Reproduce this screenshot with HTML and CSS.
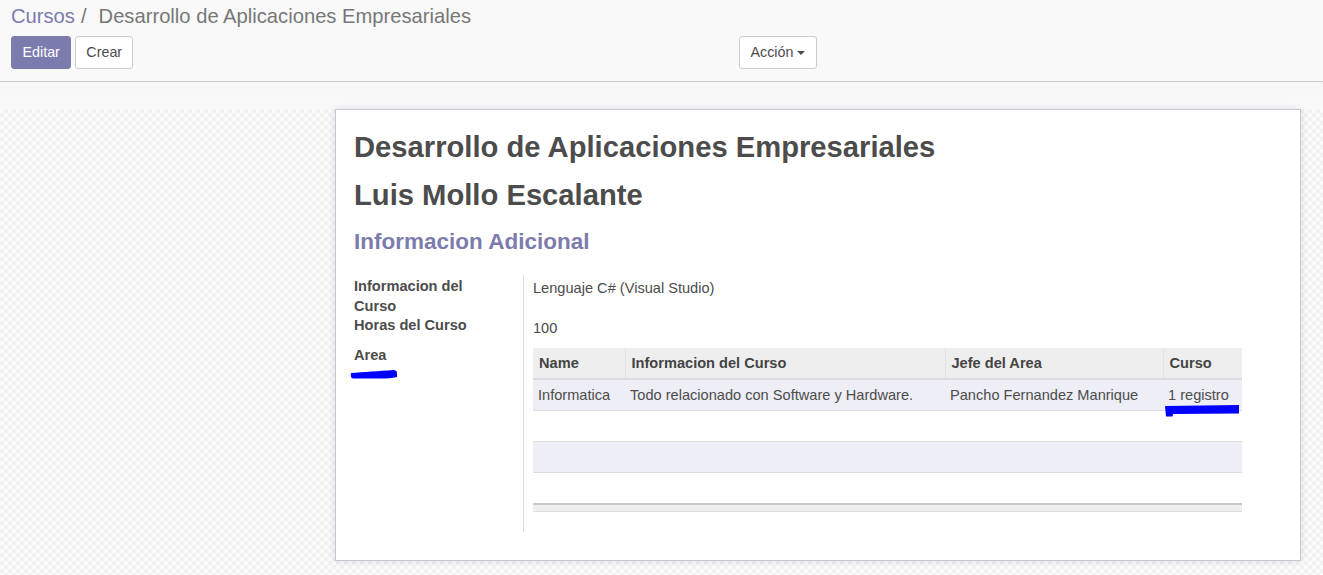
FILE: index.html
```html
<!DOCTYPE html>
<html lang="es">
<head>
<meta charset="utf-8">
<title>Desarrollo de Aplicaciones Empresariales</title>
<link rel="stylesheet" href="styles.css">
</head>
<body>
<header class="cp">
  <div class="breadcrumb">
    <a class="crumb-link" href="#">Cursos</a><span class="crumb-sep">/</span><span class="crumb-active">Desarrollo de Aplicaciones Empresariales</span>
  </div>
  <div class="cp-row">
    <div class="cp-left">
      <button class="btn btn-primary">Editar</button>
      <button class="btn btn-default">Crear</button>
    </div>
    <div class="cp-right">
      <button class="btn btn-default btn-action">Acción <span class="caret"></span></button>
    </div>
  </div>
</header>
<div class="statusbar"></div>
<main class="sheet-bg">
  <section class="sheet">
    <h1 class="title">Desarrollo de Aplicaciones Empresariales</h1>
    <h1 class="title">Luis Mollo Escalante</h1>
    <h2 class="subtitle">Informacion Adicional</h2>
    <div class="group">
      <div class="lbl r1">Informacion del Curso</div>
      <div class="val r1">Lenguaje C# (Visual Studio)</div>
      <div class="lbl r2">Horas del Curso</div>
      <div class="val r2">100</div>
      <div class="lbl r3">Area
        <svg class="mark mark-area" width="48" height="12" viewBox="0 0 48 12"><path d="M1 5 C12 4 30 3 43 2 Q47 2 47 5 L47 9 Q40 10.5 30 10.5 L3 10.5 Q0 10 1 5 Z" fill="#0000ff"/></svg>
      </div>
      <div class="val r3">
        <table class="list">
          <colgroup><col class="c1"><col class="c2"><col class="c3"><col class="c4"></colgroup>
          <thead>
            <tr><th>Name</th><th>Informacion del Curso</th><th>Jefe del Area</th><th>Curso</th></tr>
          </thead>
          <tbody>
            <tr class="odd"><td>Informatica</td><td>Todo relacionado con Software y Hardware.</td><td>Pancho Fernandez Manrique</td><td class="rel">1 registro<svg class="mark mark-reg" width="75" height="12" viewBox="0 0 75 12"><path d="M0 1 L74 0 L74 8.5 L8 9 L7.5 11.5 L1 11.5 Z" fill="#0000ff"/></svg></td></tr>
            <tr class="even"><td></td><td></td><td></td><td></td></tr>
            <tr class="odd"><td></td><td></td><td></td><td></td></tr>
            <tr class="even"><td></td><td></td><td></td><td></td></tr>
          </tbody>
          <tfoot>
            <tr><td></td><td></td><td></td><td></td></tr>
          </tfoot>
        </table>
      </div>
    </div>
  </section>
</main>
</body>
</html>
```
FILE: styles.css
```css
html, body {
  margin: 0;
  padding: 0;
}
body {
  font-family: "Liberation Sans", Arial, sans-serif;
  font-size: 14.6px;
  color: #4c4c4c;
  background: #f9f9f9;
  min-height: 575px;
  display: flex;
  flex-direction: column;
  overflow: hidden;
}
.cp {
  background: #f9f9f9;
  border-bottom: 1px solid #cccccc;
  padding: 3px 11px 12px;
}
.breadcrumb {
  font-size: 20.2px;
  line-height: 26px;
  white-space: nowrap;
}
.crumb-link {
  color: #7c7bad;
  text-decoration: none;
}
.crumb-sep {
  color: #777777;
  margin: 0 12px 0 6px;
}
.crumb-active {
  color: #777777;
}
.cp-row {
  margin-top: 7px;
  display: grid;
  grid-template-columns: 1fr 1fr;
}
.cp-left {
  display: flex;
  gap: 4px;
}
.cp-right {
  display: flex;
  padding-left: 77px;
}
.btn {
  font-family: "Liberation Sans", Arial, sans-serif;
  font-size: 14.3px;
  height: 33px;
  padding: 0 10px;
  border-radius: 3px;
  border: 1px solid #cccccc;
  background: #ffffff;
  color: #4c4c4c;
  cursor: pointer;
  line-height: 31px;
}
.btn-primary {
  background: #7c7bad;
  border-color: #7c7bad;
  color: #ffffff;
  padding: 0 10.5px;
}
.btn-action {
  display: flex;
  align-items: center;
  gap: 4px;
  padding: 0 11px;
}
.caret {
  width: 0;
  height: 0;
  border-left: 4px solid transparent;
  border-right: 4px solid transparent;
  border-top: 4px solid #4c4c4c;
  margin-top: 1px;
}
.statusbar {
  height: 27px;
  background: linear-gradient(#f7f7f7, #fafafa);
}
.sheet-bg {
  flex: 1;
  background-color: #fbfbfb;
  background-image: repeating-conic-gradient(#f2f2f2 0 25%, transparent 0 50%);
  background-size: 8px 8px;
  padding-left: 335px;
}
.sheet {
  width: 888px;
  background: #ffffff;
  border: 1px solid #c8c8d3;
  box-shadow: 0 0 8px rgba(0, 0, 0, 0.12);
  padding: 13px 58px 28px 18px;
}
.title {
  margin: 0;
  font-size: 29.2px;
  line-height: 48px;
  font-weight: bold;
  color: #4c4c4c;
}
.subtitle {
  margin: 8px 0 0;
  font-size: 22.5px;
  line-height: 30px;
  font-weight: bold;
  color: #7c7bad;
}
.group {
  margin-top: 18px;
  display: grid;
  grid-template-columns: 169px 1fr;
  line-height: 19.5px;
}
.lbl {
  font-weight: bold;
  color: #4c4c4c;
  padding-right: 40px;
  position: relative;
}
.val {
  border-left: 1px solid #dddddd;
  padding-left: 9px;
}
.lbl.r1 { padding-top: 2px; }
.val.r1 { padding-top: 3.5px; }
.val.r2 { padding-top: 3px; padding-bottom: 7.5px; }
.val.r3 { padding-top: 2px; padding-bottom: 20px; }
.mark {
  position: absolute;
  display: block;
}
.mark-area {
  left: -4px;
  top: 22px;
}
.list {
  width: 709px;
  border-collapse: collapse;
  table-layout: fixed;
  line-height: 20px;
}
.c1 { width: 92px; }
.c2 { width: 320px; }
.c3 { width: 218px; }
.c4 { width: 79px; }
.list th {
  background: #eeeeee;
  height: 30px;
  padding: 0 6px;
  text-align: left;
  font-weight: bold;
  color: #444444;
  border-bottom: 2px solid #dddddd;
  border-left: 1px solid #e2e2e2;
}
.list th:first-child { border-left: none; }
.list tbody td {
  height: 30px;
  padding: 0 5px;
  border-bottom: 1px solid #dddddd;
  white-space: nowrap;
  color: #4c4c4c;
}
.list tbody tr.odd td { background: #eeeef6; }
.list tbody tr.even td { background: #ffffff; }
.list tfoot td {
  height: 6px;
  padding: 0;
  background: #eeeeee;
  border-top: 2px solid #c8c8c8;
  border-bottom: 1px solid #dddddd;
}
.rel { position: relative; overflow: visible; }
.mark-reg {
  left: 2px;
  top: 25px;
}
```
